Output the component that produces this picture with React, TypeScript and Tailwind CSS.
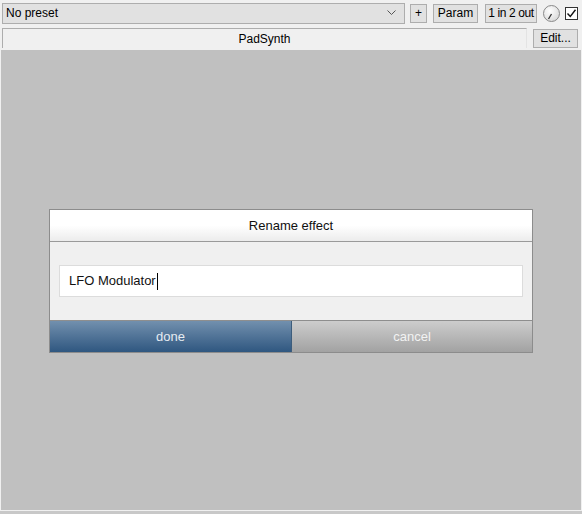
import React from 'react';

function ToolButton({ label, className }: { label: string; className?: string }) {
  return (
    <div
      className={`h-[19px] flex items-center justify-center border border-[#adadad] bg-[#e1e1e1] text-[12px] text-black leading-none whitespace-nowrap ${className ?? ''}`}
    >
      {label}
    </div>
  );
}

function Knob() {
  return (
    <svg width="19" height="19" viewBox="0 0 19 19" className="shrink-0">
      <defs>
        <radialGradient id="kg" cx="40%" cy="35%" r="70%">
          <stop offset="0%" stopColor="#ffffff" />
          <stop offset="100%" stopColor="#d8d8d8" />
        </radialGradient>
      </defs>
      <circle cx="9.5" cy="9.5" r="8" fill="url(#kg)" stroke="#8a8a8a" strokeWidth="1" />
      <line x1="9.5" y1="10" x2="6.5" y2="15" stroke="#333" strokeWidth="1.3" />
    </svg>
  );
}

export default function App() {
  return (
    <div
      className="w-[582px] h-[514px] bg-[#f0f0f0] flex flex-col overflow-hidden"
      style={{ fontFamily: '"Liberation Sans", Arial, sans-serif' }}
    >
      {/* Top toolbar */}
      <div className="flex items-center h-[25px] pl-[2px] pt-[1px]">
        <div className="w-[403px] h-[21px] border border-[#adadad] bg-[#e1e1e1] flex items-center justify-between pl-[3px] pr-[8px] text-[12px] text-black">
          <span>No preset</span>
          <svg width="9" height="6" viewBox="0 0 9 6">
            <path d="M0.5 0.5 L4.5 4.5 L8.5 0.5" fill="none" stroke="#555" strokeWidth="1" />
          </svg>
        </div>
        <ToolButton label="+" className="ml-[5px] w-[17px]" />
        <ToolButton label="Param" className="ml-[6px] w-[45px]" />
        <ToolButton label="1 in 2 out" className="ml-[7px] w-[52px] tracking-[-0.4px]" />
        <div className="ml-[5px]">
          <Knob />
        </div>
        <div className="ml-[4px] w-[13px] h-[13px] border border-[#333] bg-white flex items-center justify-center">
          <svg width="11" height="11" viewBox="0 0 11 11">
            <path d="M1.5 5.5 L4.3 8.5 L9.5 1.8" fill="none" stroke="#111" strokeWidth="1.4" />
          </svg>
        </div>
      </div>

      {/* Plugin name row */}
      <div className="flex items-center h-[24px] pl-[2px] pt-[2px]">
        <div className="w-[525px] h-[20px] border border-[#adadad] border-b-0 border-r-[#e3e3e3] bg-[#f0f0f0] flex items-center justify-center text-[12px] text-black">
          PadSynth
        </div>
        <ToolButton label="Edit..." className="ml-[6px] w-[45px] h-[19px]" />
      </div>

      {/* Main area */}
      <div className="flex-1 mx-[1px] mt-[1px] pt-[2px] bg-[#c0c0c0] flex items-center justify-center">
        <div className="w-[484px] border border-[#8c8c8c] flex flex-col">
          <div className="h-[32px] bg-gradient-to-b from-white from-50% to-[#ececec] border-b border-[#9a9a9a] flex items-center justify-center text-[13px] text-[#111]">
            Rename effect
          </div>
          <div className="bg-[#f0f0f0] pt-[23px] pb-[23px] px-[9px] border-b border-[#8e8e8e]">
            <div className="h-[32px] bg-white border border-[#dcdcdc] flex items-center pl-[9px] text-[13px] text-[#111]">
              LFO Modulator
              <span className="inline-block w-[1px] h-[17px] bg-black ml-[1px]" />
            </div>
          </div>
          <div className="flex h-[31px]">
            <div className="w-[242px] bg-gradient-to-b from-[#7290ae] to-[#2f5780] flex items-center justify-center text-[13px] text-[#e6ecf2] border-r border-[#3d5d7c]">
              done
            </div>
            <div className="flex-1 bg-gradient-to-b from-[#cdcdcd] to-[#a2a2a2] flex items-center justify-center text-[13px] text-[#f2f2f2]">
              cancel
            </div>
          </div>
        </div>
      </div>

      {/* Bottom edge */}
      <div className="h-[1px] bg-[#f0f0f0]" />
      <div className="h-[3px] bg-[#c8c8c8]" />
    </div>
  );
}
